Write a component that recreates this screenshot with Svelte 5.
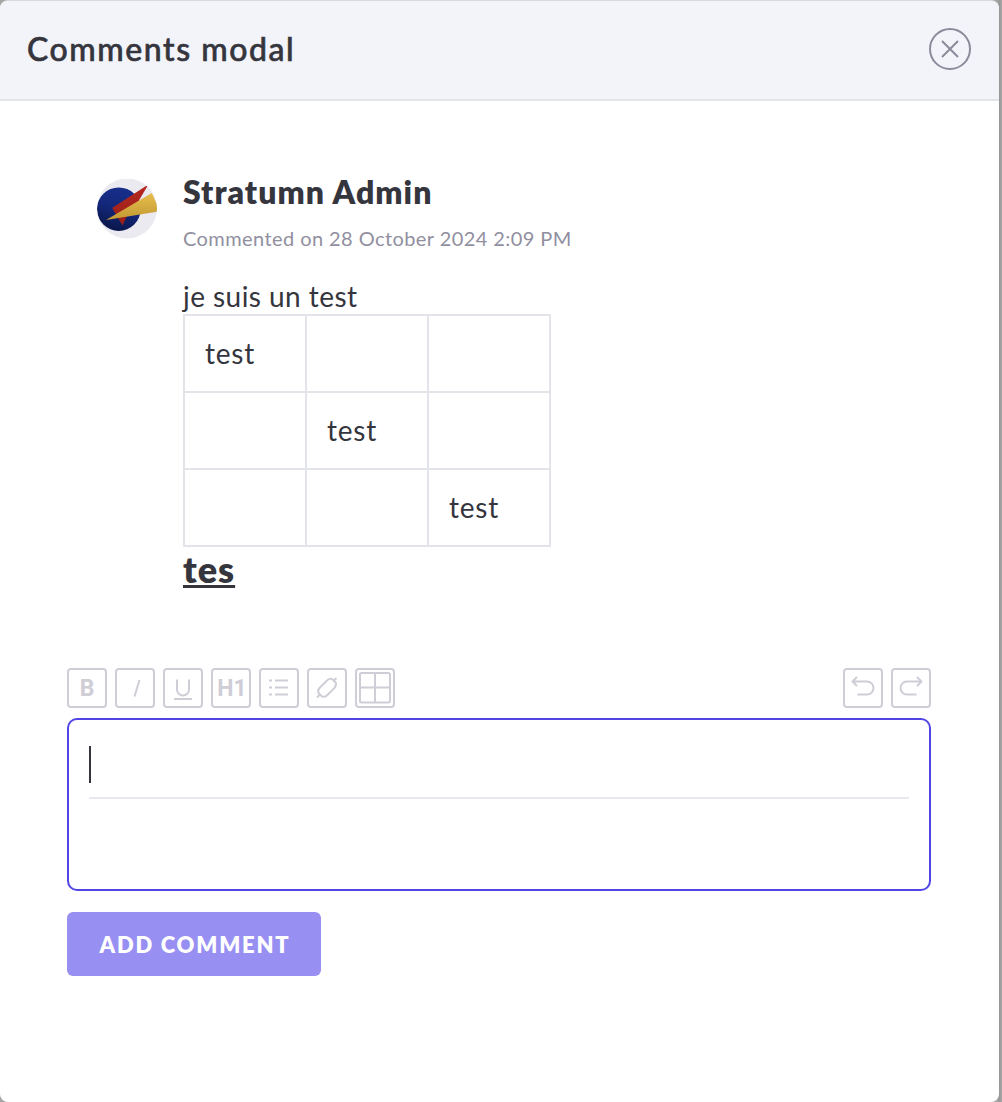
<script>
  const rows = [
    ['test', '', ''],
    ['', 'test', ''],
    ['', '', 'test'],
  ];
</script>

<div class="backdrop">
  <section class="modal">
    <header>
      <h1><span>Comments modal</span></h1>
      <button class="close" aria-label="Close">
        <svg viewBox="0 0 42 42" width="42" height="42">
          <circle cx="21" cy="21" r="20" />
          <path d="M13 13l16 16M29 13l-16 16" />
        </svg>
      </button>
    </header>

    <div class="body">
      <article class="comment">
        <svg class="avatar" viewBox="0 0 60 60" width="60" height="60">
          <defs>
            <linearGradient id="blue" x1="0.65" y1="0" x2="0.35" y2="1">
              <stop offset="0" stop-color="#172f8c" />
              <stop offset="0.5" stop-color="#14277a" />
              <stop offset="1" stop-color="#091548" />
            </linearGradient>
            <linearGradient id="gold" x1="0" y1="0" x2="0" y2="1">
              <stop offset="0" stop-color="#e6bd4b" />
              <stop offset="1" stop-color="#c39a34" />
            </linearGradient>
            <linearGradient id="red" x1="0" y1="0" x2="0" y2="1">
              <stop offset="0" stop-color="#b72820" />
              <stop offset="1" stop-color="#962019" />
            </linearGradient>
            <clipPath id="disc"><circle cx="30" cy="29.500" r="30" /></clipPath>
          </defs>
          <g clip-path="url(#disc)">
            <rect width="60" height="60" fill="#ebeaf1" />
            <circle cx="21.8" cy="30.2" r="21.8" fill="url(#blue)" />
            <path d="M50.500 7L42.500 20.500L30 37L25.500 46.500L15.200 29L49 7z" fill="url(#red)" />
            <path d="M9 41L54.800 14L62 30V32.300z" fill="url(#gold)" />
          </g>
        </svg>
        <div class="content">
          <h2><span>Stratumn Admin</span></h2>
          <p class="date"><span>Commented on 28 October 2024 2:09 PM</span></p>
          <p class="text"><span>je suis un test</span></p>
          <table>
            <tbody>
              {#each rows as row}
                <tr>
                  {#each row as cell}
                    <td>{cell}</td>
                  {/each}
                </tr>
              {/each}
            </tbody>
          </table>
          <h3><span>tes</span></h3>
        </div>
      </article>

      <div class="toolbar">
        <button class="tool bold">B</button>
        <button class="tool" aria-label="Italic">
          <svg viewBox="0 0 36 36"><path d="M22.500 10L17.500 26.500" /></svg>
        </button>
        <button class="tool" aria-label="Underline">
          <svg viewBox="0 0 36 36"><path d="M12 9.500v10a6 6 0 0 0 12 0V9.500M9 29h18" /></svg>
        </button>
        <button class="tool bold heading">H1</button>
        <button class="tool" aria-label="List">
          <svg viewBox="0 0 36 36"><path d="M8 10.500h3M8 17.500h3M8 24.500h3M14 10.500h13M14 17.500h13M14 24.500h13" /></svg>
        </button>
        <button class="tool" aria-label="Link">
          <svg viewBox="0 0 36 36">
            <path d="M8 27.500L11.500 24M24 11.500L27.500 8M13 26.500L9.700 23.200C8.800 21.500 9.200 19.300 10.500 18L18 10.500C19.700 8.900 22 8.500 23.700 9.400L26.800 12.700C27.200 14.700 26.700 16.700 25.300 18.100L17.600 25.700C16.300 26.800 14.500 27.100 13 26.500z" />
          </svg>
        </button>
        <button class="tool" aria-label="Table">
          <svg viewBox="0 0 36 36"><rect x="3" y="3" width="30" height="29.500" rx="1.500" /><path d="M18 3v29M3 17.500h30" /></svg>
        </button>
        <span class="space"></span>
        <button class="tool" aria-label="Undo">
          <svg viewBox="0 0 36 36"><path d="M12 7L7.500 11.500L12 16M7.500 11.500H22a6.500 6.500 0 0 1 0 13H12.500" /></svg>
        </button>
        <button class="tool" aria-label="Redo">
          <svg viewBox="0 0 36 36"><path d="M24 7L28.500 11.500L24 16M28.500 11.500H14a6.500 6.500 0 0 0 0 13H23.500" /></svg>
        </button>
      </div>

      <div class="editor">
        <div class="line"><span class="caret"></span></div>
      </div>

      <button class="submit"><span>ADD COMMENT</span></button>
    </div>
  </section>
</div>

<style>
  .backdrop {
    box-sizing: border-box;
    height: 1102px;
    padding: 1px 3px 0 0;
    background: linear-gradient(90deg, #a5a5a5 0, #a5a5a5 998px, #949494 999px, #a9a9a9 1002px);
    font-family: Lato, 'Open Sans', sans-serif;
    color: #35353d;
    overflow: hidden;
  }
  .modal {
    height: 1101px;
    border-radius: 8px;
    background: #fff;
    overflow: hidden;
    box-shadow: 0 -1px 0 #d9d9db;
  }
  header {
    box-sizing: border-box;
    height: 100px;
    display: flex;
    align-items: flex-start;
    justify-content: space-between;
    padding: 27px 28px 0 27px;
    background: #f3f4f9;
    border-bottom: 2px solid #e3e3ea;
  }
  h1, h2, h3, p { margin: 0; white-space: nowrap; }
  h1 {
    font-size: 32px;
    line-height: 42px;
    font-weight: 500;
    letter-spacing: 1.55px;
    -webkit-text-stroke: 0.6px currentColor;
  }
  button { font-family: inherit; padding: 0; margin: 0; border: 0; background: none; }
  svg { display: block; fill: none; stroke-width: 2; }
  .close { stroke: #8c8a9a; }
  .avatar { flex: none; margin-top: 7px; }
  .body { padding: 71px 68px 0 67px; }
  .comment { display: flex; gap: 26px; padding-left: 30px; height: 496px; }
  h2 { font-size: 32px; line-height: 40px; font-weight: 800; letter-spacing: 1.05px; }
  .date {
    margin-top: 12px;
    font-size: 20px;
    line-height: 28px;
    letter-spacing: 0.42px;
    color: #918f9f;
  }
  .text { margin-top: 26px; font-size: 28px; line-height: 36px; letter-spacing: 0.45px; }
  table { border-collapse: collapse; table-layout: fixed; width: 368px; }
  td {
    box-sizing: border-box;
    height: 77px;
    padding: 0 20px 2px;
    border: 2px solid #e3e3ea;
    font-size: 28px;
    letter-spacing: 0.8px;
  }
  h3 {
    font-size: 36px;
    line-height: 44px;
    font-weight: 800;
    letter-spacing: 1px;
    text-decoration: underline;
    text-decoration-thickness: 3px;
    text-underline-offset: 2px;
    text-decoration-skip-ink: none;
  }
  .toolbar { display: flex; gap: 8px; }
  .space { flex: 1; }
  .tool {
    box-sizing: border-box;
    width: 40px;
    height: 40px;
    border: 2px solid #cfcdd6;
    border-radius: 4px;
    color: #cfcdd6;
    stroke: currentColor;
  }
  .tool svg { width: 36px; height: 36px; stroke-linejoin: round; }
  .bold { font-family: Roboto, sans-serif; font-size: 23px; line-height: 36px; font-weight: 700; stroke: none; padding-top: 1px; }
  .heading { padding-left: 2px; }
  .editor {
    box-sizing: border-box;
    margin-top: 10px;
    height: 173px;
    padding: 0 20px;
    border: 2px solid #5145e5;
    border-radius: 10px;
  }
  .line {
    box-sizing: border-box;
    height: 79px;
    padding-top: 26px;
    border-bottom: 2px solid #e8e8ee;
  }
  .caret { display: block; width: 2px; height: 37px; background: #35353d; }
  .submit {
    display: block;
    margin-top: 21px;
    width: 254px;
    height: 64px;
    padding-left: 2px;
    border-radius: 6px;
    background: #978ff2;
    color: #fff;
    font-size: 22px;
    font-weight: 800;
    letter-spacing: 1.75px;
    white-space: nowrap;
  }
</style>
